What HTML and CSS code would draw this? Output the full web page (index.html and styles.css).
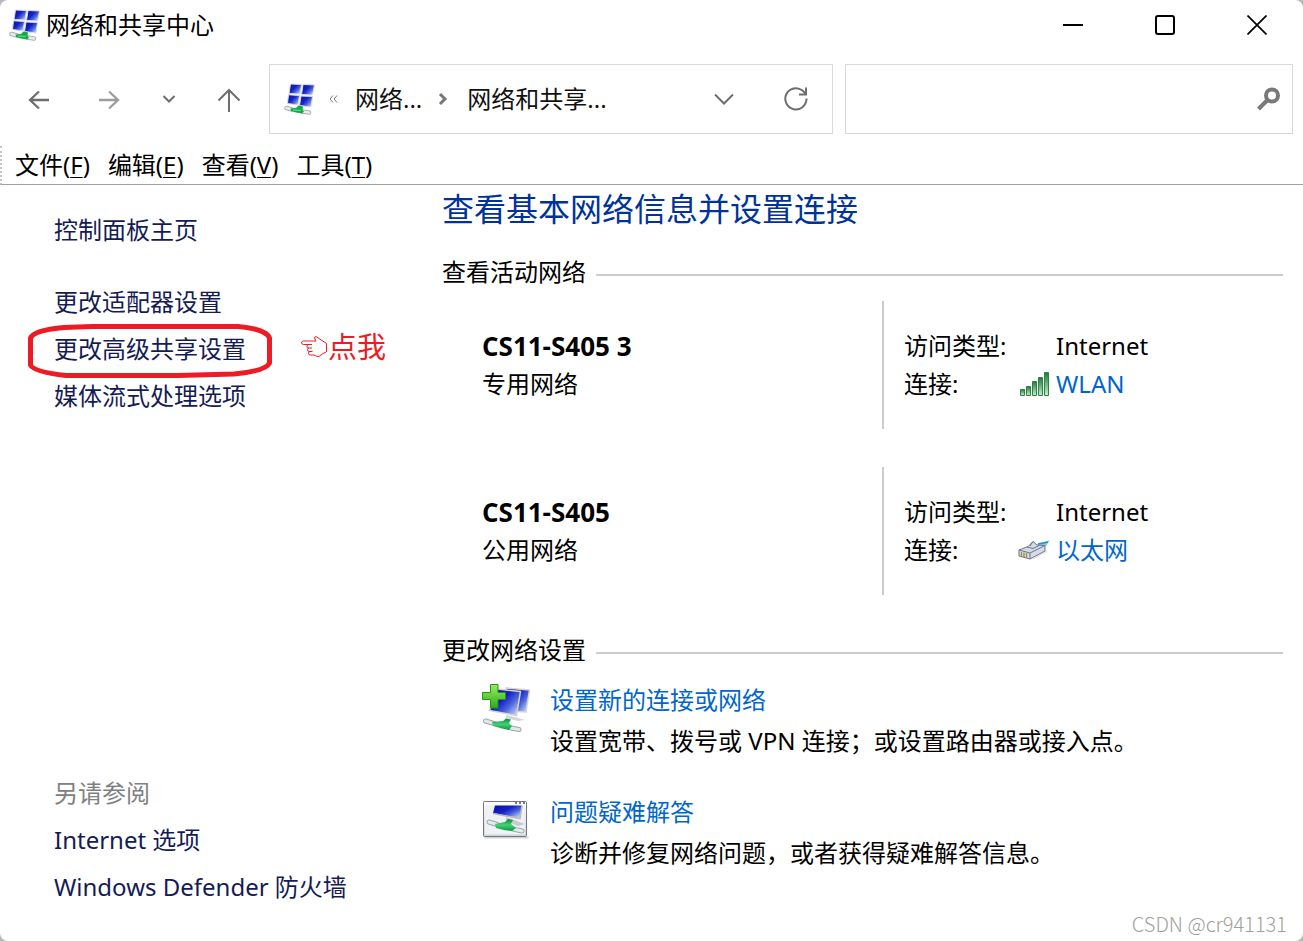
FILE: index.html
```html
<!DOCTYPE html>
<html lang="zh-CN">
<head>
<meta charset="utf-8">
<title>网络和共享中心</title>
<meta name="viewport" content="width=device-width, initial-scale=1">
<link rel="stylesheet" href="styles.css">
</head>
<body>
<svg class="defs" aria-hidden="true">
  <defs>
    <linearGradient id="screen" x1="0" y1="0" x2="1" y2="0.8">
      <stop offset="0" stop-color="#0a12a0"/><stop offset="0.45" stop-color="#1420c4"/><stop offset="0.7" stop-color="#4a62dc"/><stop offset="1" stop-color="#c4d4fa"/>
    </linearGradient>
    <linearGradient id="plus" x1="0" y1="0" x2="0" y2="1">
      <stop offset="0" stop-color="#9be86a"/><stop offset="1" stop-color="#2fae12"/>
    </linearGradient>
    <linearGradient id="green" x1="0" y1="0" x2="0" y2="1">
      <stop offset="0" stop-color="#0b8a3c"/><stop offset="0.5" stop-color="#43d176"/><stop offset="1" stop-color="#0c9440"/>
    </linearGradient>
    <linearGradient id="bar" x1="0" y1="0" x2="0" y2="1">
      <stop offset="0" stop-color="#1f7a3a"/><stop offset="1" stop-color="#c4f0cc"/>
    </linearGradient>
    <linearGradient id="pane" x1="0" y1="0" x2="0" y2="1">
      <stop offset="0" stop-color="#ffffff"/><stop offset="1" stop-color="#cdd1da"/>
    </linearGradient>
    <symbol id="network" viewBox="0 0 32 32">
      <g fill="url(#screen)" stroke="#dcdcdc" stroke-width="1">
        <path d="M6.500 1 17.500 1.500 16 11 5 10.500Z"/>
        <path d="M19 1.500 30.500 2 28.500 12 17.500 11.500Z"/>
        <path d="M4.500 11.800 15.500 12.500 14 22 3.500 20.500Z"/>
        <path d="M17 13 28.500 13.500 27 24 15.500 22.500Z"/>
      </g>
      <path d="M2.500 25 8 26.500M18 28.500 25 29.500" stroke="#a9b2b2" stroke-width="4.500" stroke-linecap="round"/>
      <path d="M2.500 25 8 26.500M18 28.500 25 29.500" stroke="#e6ecec" stroke-width="2.500" stroke-linecap="round"/>
      <path d="M6.500 25.500 12 25 14.500 22.500 19 23.500 18.500 27 20 28.500 18 30.500 12 29.500 7 28Z" fill="#10ab49"/>
      <path d="M9 27 17 27.500" stroke="#45d877" stroke-width="1.500"/>
    </symbol>
  </defs>
</svg>
<div class="window">
  <header class="titlebar">
    <svg class="app-icon" aria-hidden="true"><use href="#network"/></svg>
    <h1 class="caption">网络和共享中心</h1>
    <div class="controls">
      <button class="control" aria-label="最小化"><svg viewBox="0 0 20 20"><path d="M0 10H20" stroke-width="2"/></svg></button>
      <button class="control" aria-label="最大化"><svg viewBox="0 0 20 20"><rect x="1" y="1" width="18" height="18" rx="2" stroke-width="2"/></svg></button>
      <button class="control" aria-label="关闭"><svg viewBox="0 0 20 20"><path d="M0.500 0.500 19.500 19.500M19.500 0.500 0.500 19.500" stroke-width="1.700"/></svg></button>
    </div>
  </header>

  <div class="toolbar">
    <nav class="history" aria-label="导航">
      <button class="tool" aria-label="后退"><svg viewBox="0 0 24 24"><path d="M22 12H3M12 3.500 3 12 12 20.500" stroke-width="2.300"/></svg></button>
      <button class="tool tool-dim" aria-label="前进"><svg viewBox="0 0 24 24"><path d="M2 12H21M12 3.500 21 12 12 20.500" stroke-width="2.300"/></svg></button>
      <button class="tool tool-small" aria-label="最近的位置"><svg viewBox="0 0 24 24"><path d="M6.500 8 12 13.500 17.500 8"/></svg></button>
      <button class="tool" aria-label="向上"><svg viewBox="0 0 24 24"><path d="M12 24V2M1.500 12.500 12 2 22.500 12.500"/></svg></button>
    </nav>
    <div class="address">
      <svg class="app-icon" aria-hidden="true"><use href="#network"/></svg>
      <button class="overflow" aria-label="更多"><svg viewBox="0 0 9 8"><path d="M4 0.500 1 4 4 7.500M8 0.500 5 4 8 7.500"/></svg></button>
      <button class="crumb">网络...</button>
      <svg class="crumb-arrow" viewBox="0 0 10 14" aria-hidden="true"><path d="M2 2 7 7 2 12"/></svg>
      <button class="crumb">网络和共享...</button>
      <div class="address-tools">
        <button class="tool" aria-label="上一个位置"><svg viewBox="0 0 24 24"><path d="M3 7.500 12 16.500 21 7.500"/></svg></button>
        <button class="tool" aria-label="刷新"><svg viewBox="0 0 24 24"><path d="M22.500 11.500A10.600 10.600 0 1 1 18.500 3.500L21.500 6.500M22 0.500V7.500H15"/></svg></button>
      </div>
    </div>
    <div class="search">
      <input class="search-input" type="text" aria-label="搜索">
      <svg class="search-icon" viewBox="0 0 24 24" aria-hidden="true"><circle cx="15" cy="8.500" r="6" stroke-width="4"/><path d="M10.500 13 1.500 22" stroke-width="4"/></svg>
    </div>
  </div>

  <nav class="menubar" aria-label="菜单">
    <button class="menu">文件(<u>F</u>)</button>
    <button class="menu">编辑(<u>E</u>)</button>
    <button class="menu">查看(<u>V</u>)</button>
    <button class="menu">工具(<u>T</u>)</button>
  </nav>

  <div class="content">
    <aside class="sidebar">
      <a class="side-link" href="#">控制面板主页</a>
      <ul class="side-list">
        <li><a class="side-link" href="#">更改适配器设置</a></li>
        <li class="marked">
          <a class="side-link" href="#">更改高级共享设置</a>
          <svg class="ring" viewBox="0 0 244 54" aria-hidden="true"><path d="M2.500 14 Q6 6 36 3.500L64 2.500H210Q238 5 241.500 14V39Q238 47 206 50L150 51.500H38Q6 48 2.500 41Z"/></svg>
          <span class="note"><svg class="hand" viewBox="0 0 28 24" role="img" aria-label="☜"><path d="M16 6H3.500Q1.500 6 1.500 7.700T3.500 9.500H12M12 9.500H8.500Q7 9.500 7 11.200T8.500 13H12M9 13Q7.500 13 7.500 14.700T9 16.500H12.500M10 16.500Q8.500 16.500 8.500 18.200T10 20H14Q16 21.500 19 21.500L23 18.500 26 17M16 6 14.500 3Q14.500 1.200 16.500 1.800L22 5.500 26.500 8.500V17"/></svg>点我</span>
        </li>
        <li><a class="side-link" href="#">媒体流式处理选项</a></li>
      </ul>
      <div class="see-also">
        <h2 class="see-also-title">另请参阅</h2>
        <a class="side-link" href="#">Internet 选项</a>
        <a class="side-link" href="#">Windows Defender 防火墙</a>
      </div>
    </aside>

    <main class="main">
      <h2 class="headline">查看基本网络信息并设置连接</h2>
      <h3 class="section-title">查看活动网络</h3>
      <div class="networks">
        <section class="network">
          <div class="identity"><strong>CS11-S405 3</strong><span>专用网络</span></div>
          <dl class="details">
            <dt>访问类型:</dt><dd>Internet</dd>
            <dt>连接:</dt>
            <dd class="connection">
              <svg class="link-icon" viewBox="0 0 32 26" aria-hidden="true"><g fill="url(#bar)" stroke="#2f8048" stroke-width="1"><path d="M2.500 18.500h4v6h-4z"/><path d="M8.500 15.500h4v9h-4z"/><path d="M14.500 10.500h4v14h-4z"/><path d="M20.500 6.500h4v18h-4z"/><path d="M26.500 1.500h4v23h-4z"/></g></svg>
              <a class="link" href="#">WLAN</a>
            </dd>
          </dl>
        </section>
        <section class="network">
          <div class="identity"><strong>CS11-S405</strong><span>公用网络</span></div>
          <dl class="details">
            <dt>访问类型:</dt><dd>Internet</dd>
            <dt>连接:</dt>
            <dd class="connection">
              <svg class="link-icon" viewBox="0 0 32 26" aria-hidden="true">
                <path d="M19 8 32 3 28 9 22 11Z" fill="#7accec"/><path d="M20 7 30 5" stroke="#258eb4" stroke-width="1.500"/>
                <path d="M1 13 10 9.500 15 4.500 19 8 27 8.500V14L12 22 1 19Z" fill="#d5dae6" stroke="#69758e" stroke-width="1"/>
                <path d="M1 13 12 16 27 8.500M12 16V22M9 10 15 11.500 21 8.500M15 4.500 12 9" fill="none" stroke="#69758e" stroke-width="1"/>
                <path d="M3.500 15V19M6 15.500V20M8.500 16V20.500" stroke="#a39428" stroke-width="1.300"/>
                <path d="M15 22 29 14" stroke="#d4d7dc" stroke-width="1"/>
              </svg>
              <a class="link" href="#">以太网</a>
            </dd>
          </dl>
        </section>
      </div>

      <h3 class="section-title">更改网络设置</h3>
      <ul class="tasks">
        <li class="task">
          <svg class="task-icon" viewBox="0 0 48 48" aria-hidden="true">
            <path d="M24 4 47.500 6 44 28 30 27Z" fill="url(#screen)" stroke="#d6d3cc" stroke-width="1.500"/>
            <path d="M24 31 33 33 43 36 36 37 24 34Z" fill="#d4d6da"/>
            <path d="M15 5 38.500 7.500 34.500 31.500 7.500 26.500Z" fill="url(#screen)" stroke="#d6d3cc" stroke-width="1.500"/>
            <path d="M3.500 37 12 39.500M29 44 37 45.500" stroke="#9ba9a9" stroke-width="5" stroke-linecap="round"/>
            <path d="M3.500 37 12 39.500M29 44 37 45.500" stroke="#e1e9e8" stroke-width="3" stroke-linecap="round"/>
            <path d="M10 38 21 37 24 34.500 29 35.500 27 39 30 42 27 46 20 44.500 11 42Z" fill="url(#green)"/>
            <path d="M8.500 0.500H16V8.500H23.500V15.500H16V24H8.500V15.500H0.500V8.500H8.500Z" fill="url(#plus)" stroke="#249614" stroke-width="1"/>
          </svg>
          <div class="task-text"><a class="link" href="#">设置新的连接或网络</a><p>设置宽带、拨号或 VPN 连接；或设置路由器或接入点。</p></div>
        </li>
        <li class="task">
          <svg class="task-icon" viewBox="0 0 48 48" aria-hidden="true">
            <path d="M2.500 41.500H46.500" stroke="#d3d3d6" stroke-width="2"/>
            <rect x="1.500" y="5.500" width="43" height="35" rx="1" fill="url(#pane)" stroke="#74777f" stroke-width="1"/>
            <path d="M3 9.500H43V38.500H3Z" fill="#f0f1f4"/>
            <path d="M33 7H35M37 7H39M41 7H43" stroke="#4d5260" stroke-width="1.500"/>
            <path d="M13 9.500H40L38 22 11 17Z" fill="url(#screen)"/>
            <path d="M11 17.500 38 22.500 40 9.500" fill="none" stroke="#bdb9b1" stroke-width="1.500"/>
            <path d="M24 21 43 28 36 30 24 25Z" fill="#c6c9cf"/>
            <path d="M7 26 15 28.500M31 33 40 35" stroke="#9ba9a9" stroke-width="5" stroke-linecap="round"/>
            <path d="M7 26 15 28.500M31 33 40 35" stroke="#e4ebea" stroke-width="3" stroke-linecap="round"/>
            <path d="M13 28 23 26 26 23 31 24 29 28 34 32 30 35 22 34 14 32Z" fill="url(#green)"/>
          </svg>
          <div class="task-text"><a class="link" href="#">问题疑难解答</a><p>诊断并修复网络问题，或者获得疑难解答信息。</p></div>
        </li>
      </ul>
    </main>
  </div>
  <div class="watermark">CSDN @cr941131</div>
</div>
</body>
</html>
```

FILE: styles.css
```css
* { box-sizing: border-box; }
html { background: #b8b8b8; }
body {
  margin: 0;
  font-family: "Noto Sans", "Noto Sans CJK SC", sans-serif;
  font-size: 24px;
  line-height: 38px;
  color: #000;
}
h1, h2, h3, p, ul, dl, dd { margin: 0; padding: 0; font-weight: 400; }
ul { list-style: none; }
a { text-decoration: none; }
svg { display: block; fill: none; flex: none; }
button {
  padding: 0;
  border: 0;
  background: none;
  font: inherit;
  color: inherit;
}
.defs { position: absolute; width: 0; height: 0; }

.window {
  position: relative;
  display: flex;
  flex-direction: column;
  min-height: 100vh;
  background: #fff;
  border-radius: 8px;
}

.titlebar {
  display: flex;
  align-items: center;
  height: 50px;
  padding-left: 9px;
}
.app-icon { width: 32px; height: 32px; }
.caption { margin-left: 5px; font-size: 24px; }
.controls { display: flex; margin-left: auto; }
.control {
  display: flex;
  align-items: center;
  justify-content: center;
  width: 92px;
  height: 50px;
}
.control svg { width: 20px; height: 20px; stroke: #000; }

.toolbar {
  display: flex;
  gap: 12px;
  height: 70px;
  margin: 14px 10px 0 0;
}
.history {
  display: flex;
  align-items: center;
  width: 257px;
  padding: 2px 0 0 27px;
}
.tool { width: 24px; height: 24px; }
.tool svg { width: 24px; height: 24px; stroke: #6e6e6e; stroke-width: 2; }
.tool-dim svg { stroke: #9d9d9d; }
.tool-dim { margin-left: 46px; }
.tool-small { margin: 0 36px; }
.address, .search {
  display: flex;
  align-items: center;
  min-width: 0;
  border: 1px solid #d9d9d9;
}
.address { flex: 564 1 0; padding-left: 14px; white-space: nowrap; }
.overflow { margin-left: 13px; }
.overflow svg { width: 9px; height: 8px; stroke: #777; stroke-width: 1; }
.crumb { margin-left: 17px; color: #111; }
.crumb-arrow { width: 10px; height: 14px; margin: 0 2px 0 16px; stroke: #777; stroke-width: 3; }
.address-tools { display: flex; gap: 48px; margin: 0 24px 0 auto; }
.search { flex: 448 1 0; padding-right: 11px; }
.search-input {
  flex: 1;
  min-width: 0;
  height: 100%;
  padding: 0 12px;
  border: 0;
  background: none;
  font: inherit;
}
.search-icon { width: 24px; height: 24px; stroke: #797979; }

.menubar {
  display: flex;
  gap: 18px;
  margin-top: 12px;
  padding-left: 13px;
  border-bottom: 1px solid #a0a0a0;
  border-left: 2px dotted #c4c4c4;
}
.menu u { text-decoration-thickness: 1px; text-underline-offset: 3px; }

.content { display: flex; flex: 1; }
.sidebar {
  display: flex;
  flex-direction: column;
  width: 34%;
  max-width: 442px;
  padding: 21px 0 31px 54px;
  line-height: 47px;
}
.side-link { display: block; color: #151c55; }
.side-list { margin-top: 25px; }
.marked { position: relative; }
.ring {
  position: absolute;
  left: -26px;
  top: -1px;
  width: 244px;
  height: 54px;
  stroke: #ed1c24;
  stroke-width: 5;
  stroke-linejoin: round;
  pointer-events: none;
}
.note {
  position: absolute;
  left: 246px;
  top: -2px;
  display: flex;
  align-items: center;
  font-size: 29px;
  white-space: nowrap;
  color: #ed1c24;
}
.hand { width: 28px; height: 24px; stroke: currentColor; stroke-width: 1; }
.see-also { margin-top: auto; }
.see-also-title { font-size: 24px; color: #808080; }

.main { flex: 1; padding: 0 20px 30px 0; }
.headline { font-size: 32px; line-height: 48px; color: #003399; }
.section-title {
  display: flex;
  align-items: center;
  gap: 10px;
  margin-top: 20px;
  font-size: 24px;
}
.section-title::after { content: ""; flex: 1; height: 2px; margin-top: 6px; background: #ccc; }
.networks { display: flex; flex-direction: column; gap: 38px; margin: 10px 0 36px; }
.network { display: flex; min-height: 128px; }
.identity {
  display: flex;
  flex: 0 1 440px;
  flex-direction: column;
  padding: 26px 0 26px 40px;
}
.identity strong { font-family: "Open Sans", "Noto Sans", sans-serif; font-size: 26px; }
.details {
  display: grid;
  flex: 1;
  grid-template-columns: 152px 1fr;
  align-content: start;
  padding: 26px 0 26px 20px;
  border-left: 2px solid #ccc;
}
.connection { display: flex; align-items: center; gap: 6px; margin-left: -38px; }
.link-icon { width: 32px; height: 26px; }
.link { color: #0066cc; }

.tasks { display: flex; flex-direction: column; gap: 30px; margin-top: 10px; line-height: 41px; }
.task { display: flex; gap: 20px; padding-left: 40px; }
.task-icon { width: 48px; height: 48px; margin-top: 5px; }
.task-text .link { display: block; }

.watermark {
  position: absolute;
  right: 16px;
  bottom: 2px;
  font-family: "Noto Sans CJK SC", sans-serif;
  font-size: 20px;
  font-weight: 300;
  line-height: 30px;
  color: #a0a0a0;
}
```
